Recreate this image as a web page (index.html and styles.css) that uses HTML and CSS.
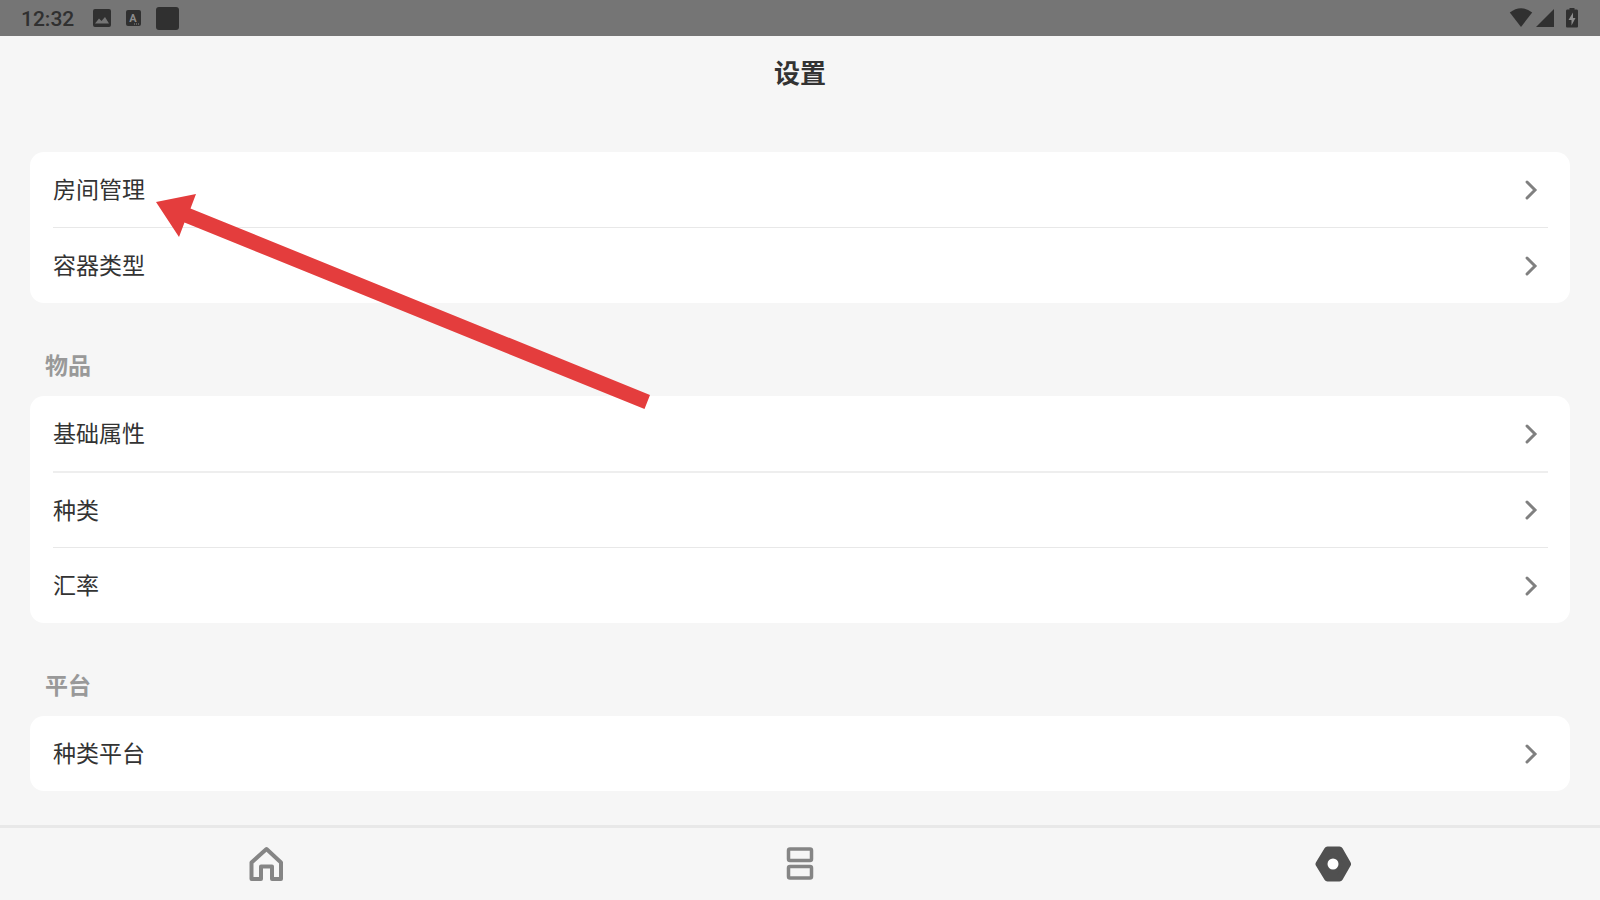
FILE: index.html
```html
<!DOCTYPE html>
<html lang="zh-CN">
<head>
    <meta charset="UTF-8">
    <meta name="viewport" content="width=device-width, initial-scale=1.0">
    <title>设置</title>
    <link rel="stylesheet" href="styles.css">
</head>
<body>
    <!-- Shared icons -->
    <svg class="sprite" aria-hidden="true">
        <symbol id="chevron" viewBox="0 0 14 22">
            <path d="M3 3 L11 11 L3 19" fill="none" stroke="currentColor" stroke-width="3" stroke-linecap="round" stroke-linejoin="miter"/>
        </symbol>
    </svg>

    <!-- System status bar -->
    <div class="status-bar">
        <div class="status-left">
            <span class="clock">12:32</span>
            <svg class="icon-image" width="18" height="18" viewBox="0 0 18 18">
                <path fill-rule="evenodd" fill="currentColor" d="M2 0H16A2 2 0 0 1 18 2V16A2 2 0 0 1 16 18H2A2 2 0 0 1 0 16V2A2 2 0 0 1 2 0ZM2 14.500H16L12 8L8.500 12L6 9.500Z"/>
            </svg>
            <svg class="icon-letter" width="15" height="16" viewBox="0 0 15 16">
                <rect width="15" height="16" rx="2" fill="currentColor"/>
                <text class="letter" x="7" y="12" text-anchor="middle">A</text>
                <path d="M8 14H14" stroke="#8c8c8c" stroke-width="1" stroke-dasharray="1 1"/>
            </svg>
            <span class="icon-square"></span>
        </div>
        <div class="status-right">
            <svg class="icon-wifi" width="24" height="20" viewBox="0 0 24 20">
                <path fill="currentColor" d="M12 19L0.800 4.500Q12 -4 23.200 4.500Z"/>
            </svg>
            <svg class="icon-signal" width="18" height="18" viewBox="0 0 18 18">
                <path fill="currentColor" d="M18 0V18H0Z"/>
            </svg>
            <svg class="icon-battery" width="12" height="20" viewBox="0 0 12 20">
                <path fill="currentColor" d="M3.500 1.500V0H8.500V1.500H11Q12 1.500 12 3V18.500Q12 19.500 11 19.500H1Q0 19.500 0 18.500V3Q0 1.500 1 1.500Z"/>
                <path fill="#8c8c8c" d="M7 4.500L2.500 12H5.500V17.500L9.500 10H7Z"/>
            </svg>
        </div>
    </div>

    <header class="page-header">
        <h1>设置</h1>
    </header>

    <!-- Settings groups -->
    <main class="content">
        <section class="group">
            <a class="row" href="#rooms"><span>房间管理</span><svg class="chevron"><use href="#chevron"/></svg></a>
            <a class="row" href="#containers"><span>容器类型</span><svg class="chevron"><use href="#chevron"/></svg></a>
        </section>

        <h2>物品</h2>
        <section class="group">
            <a class="row" href="#attributes"><span>基础属性</span><svg class="chevron"><use href="#chevron"/></svg></a>
            <a class="row thick" href="#kinds"><span>种类</span><svg class="chevron"><use href="#chevron"/></svg></a>
            <a class="row" href="#rates"><span>汇率</span><svg class="chevron"><use href="#chevron"/></svg></a>
        </section>

        <h2>平台</h2>
        <section class="group">
            <a class="row" href="#platforms"><span>种类平台</span><svg class="chevron"><use href="#chevron"/></svg></a>
        </section>

        <!-- Arrow pointing at the first row -->
        <svg class="pointer" width="494" height="216" viewBox="0 0 494 216" aria-hidden="true">
            <path fill="#e43d3d" d="M0 9L40 1L34.500 15.500L494 202L488.500 216L28.500 29.500L23 44Z"/>
        </svg>
    </main>

    <!-- Bottom tabs -->
    <nav class="tab-bar">
        <a class="tab" href="#home" aria-label="Home">
            <svg width="36" height="36" viewBox="0 0 36 36" fill="none" stroke="currentColor" stroke-width="4" stroke-linejoin="round">
                <path d="M2.500 33V16.500L17.500 3L32 16.500V33H23V20.500H12V33Z"/>
            </svg>
        </a>
        <a class="tab" href="#list" aria-label="List">
            <svg width="36" height="36" viewBox="0 0 36 36" fill="none" stroke="currentColor" stroke-width="3.500">
                <rect x="6.500" y="3" width="23" height="11.500" rx="1.500"/>
                <rect x="6.500" y="20.500" width="23" height="11.500" rx="1.500"/>
            </svg>
        </a>
        <a class="tab active" href="#settings" aria-label="Settings">
            <svg width="36" height="36" viewBox="0 0 36 36">
                <path d="M12.500 4H24.500L32.500 18L24.500 32H12.500L4 18Z" fill="currentColor" stroke="currentColor" stroke-width="7" stroke-linejoin="round"/>
                <circle cx="18" cy="18" r="5.500" fill="#ffffff"/>
            </svg>
        </a>
    </nav>
</body>
</html>
```
FILE: styles.css
```css
* {
    box-sizing: border-box;
}
body {
    margin: 0;
    min-height: 100vh;
    display: flex;
    flex-direction: column;
    background-color: #f6f6f6;
    color: #333333;
    font-family: Roboto, "Noto Sans CJK SC", sans-serif;
}
a {
    color: inherit;
    text-decoration: none;
}
svg {
    display: block;
}
.sprite {
    position: absolute;
    width: 0;
    height: 0;
}

/* Status bar */
.status-bar {
    display: flex;
    justify-content: space-between;
    height: 36px;
    padding: 0 22px 0 21px;
    background-color: #757575;
    color: #303030;
}
.status-left,
.status-right {
    display: flex;
    align-items: center;
}
.status-left {
    gap: 15px;
}
.clock {
    padding-top: 2px;
    margin-right: 4px;
    font-size: 21px;
    font-weight: 500;
    line-height: 34px;
}
.letter {
    fill: #8c8c8c;
    font-size: 11px;
    font-weight: 700;
}
.icon-square {
    width: 23px;
    height: 23px;
    border-radius: 3px;
    background-color: #303030;
}
.status-right {
    gap: 3px;
}
.icon-battery {
    margin-left: 9px;
}

/* Header */
.page-header {
    height: 116px;
    padding-top: 19px;
    text-align: center;
}
h1 {
    margin: 0;
    font-size: 26px;
    font-weight: 700;
    line-height: 38px;
}

/* Settings list */
.content {
    position: relative;
    flex: 1;
    padding: 0 30px 34px;
}
h2 {
    margin: 0;
    padding: 46px 15px 11px;
    color: #999999;
    font-size: 23px;
    font-weight: 700;
    line-height: 36px;
}
.group {
    padding: 0 22px 0 23px;
    border-radius: 14px;
    background-color: #ffffff;
}
.row {
    display: flex;
    align-items: center;
    justify-content: space-between;
    height: 75px;
    padding-right: 10px;
    font-size: 23px;
}
.row span {
    padding-bottom: 3px;
}
.row + .row {
    height: 76px;
    border-top: 1px solid #e8e8e8;
}
.row + .thick {
    border-top: 2px solid #eeeeee;
}
.chevron {
    width: 14px;
    height: 22px;
    color: #808080;
}
.pointer {
    position: absolute;
    top: 41px;
    left: 156px;
    pointer-events: none;
}

/* Bottom tabs */
.tab-bar {
    display: flex;
    height: 75px;
    border-top: 3px solid #e8e8e8;
    color: #858585;
}
.tab {
    flex: 1;
    display: flex;
    align-items: center;
    justify-content: center;
}
.tab.active {
    color: #505050;
}
```
